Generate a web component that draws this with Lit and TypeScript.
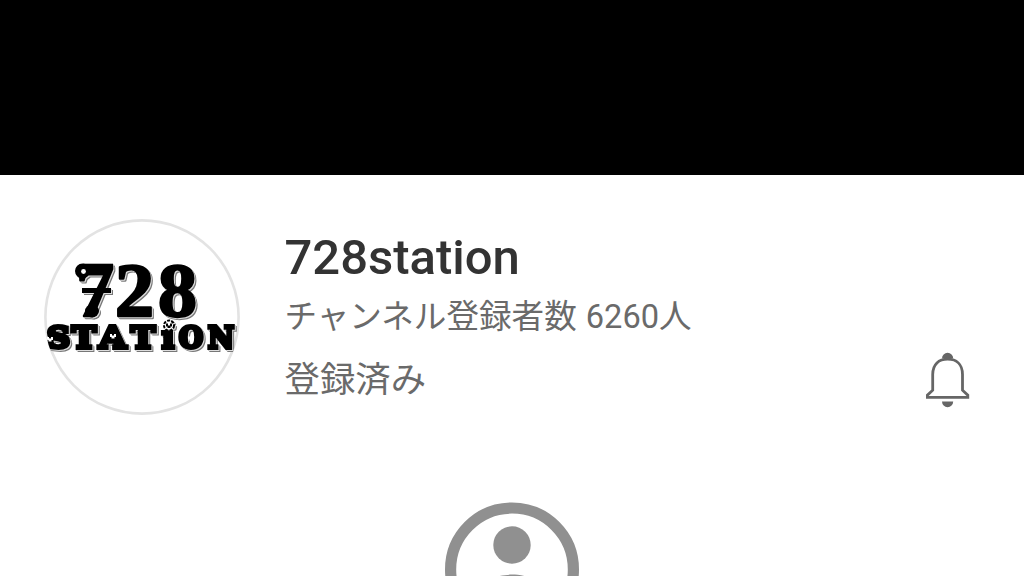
import { LitElement, html, css, svg } from 'lit';
import { customElement, property } from 'lit/decorators.js';

interface Letter {
  char: string;
  x: number;
  width: number;
}

const NUMBER: Letter[] = [
  { char: '7', x: 32, width: 38 },
  { char: '2', x: 71, width: 39 },
  { char: '8', x: 114, width: 39 },
];

const WORD: Letter[] = [
  { char: 'S', x: 3, width: 23 },
  { char: 'T', x: 28, width: 24 },
  { char: 'A', x: 55, width: 27 },
  { char: 'T', x: 87, width: 24 },
  { char: 'ı', x: 118, width: 12 },
  { char: 'O', x: 135, width: 24 },
  { char: 'N', x: 164, width: 26 },
];

@customElement('channel-avatar')
export class ChannelAvatar extends LitElement {
  static styles = css`
    :host {
      display: block;
      width: 196px;
      height: 196px;
    }

    svg {
      display: block;
    }

    .ring {
      fill: #fff;
      stroke: #e3e3e3;
      stroke-width: 2.6;
    }

    .logo {
      filter: drop-shadow(1px 1px 0 #ddd) drop-shadow(1.8px 1.8px 0.6px #777);
    }

    text {
      fill: #000;
      stroke: #000;
    }

    .number {
      font: bold 76px 'Liberation Serif', serif;
      stroke-width: 2.4;
      stroke-linejoin: round;
    }

    .word {
      font: bold 29px 'DejaVu Serif', serif;
      stroke-width: 4;
    }

    .detail {
      fill: none;
      stroke: #000;
      stroke-width: 5;
    }

    .flower {
      fill: #fff;
      stroke: #000;
      stroke-width: 2;
      stroke-dasharray: 3 1.2;
    }

    .heart {
      fill: #fff;
    }
  `;

  letters(list: Letter[], y: number, name: string) {
    return list.map(
      (l) => svg`
        <text class=${name} x=${l.x} y=${y} textLength=${l.width} lengthAdjust="spacingAndGlyphs">${l.char}</text>
      `
    );
  }

  heart(x: number, y: number) {
    return svg`
      <path class="heart" d="M${x} ${y}h2v1.5h2v-1.5h2v3h-1.5v1.5h-3v-1.5h-1.5z" />
    `;
  }

  render() {
    return html`
      <svg width="196" height="196" viewBox="0 0 196 196" role="img" aria-label="728 STATION">
        <defs>
          <clipPath id="disc"><circle cx="98" cy="98" r="97.5" /></clipPath>
        </defs>
        <circle class="ring" cx="98" cy="98" r="96.6" />
        <g clip-path="url(#disc)">
          <g class="logo">
            ${this.letters(NUMBER, 97, 'number')}
            <path class="detail" d="M38 71.5H67" />
            <circle class="detail" cx="38.5" cy="52" r="5" />
            <path class="detail" d="M39 47.2H69" />
            <ellipse cx="48" cy="92" rx="7" ry="6.5" />
            ${this.letters(WORD, 129, 'word')}
            <circle class="flower" cx="125" cy="106.5" r="5" />
          </g>
          <circle class="heart" cx="39.5" cy="52.5" r="2.4" />
          ${this.heart(3, 118)} ${this.heart(66, 115)} ${this.heart(144, 117.5)}
          <path d="M122 104.5h2v2h2v-2h2v3h-1.5v1.5h-3v-1.5h-1.5z" />
        </g>
      </svg>
    `;
  }
}

@customElement('app-root')
export class AppRoot extends LitElement {
  static styles = css`
    :host {
      display: flex;
      flex-direction: column;
      height: 576px;
      overflow: hidden;
      background: #fff;
      color: #6a6a6a;
      font-family: Roboto, 'Noto Sans CJK JP', sans-serif;
    }

    .banner {
      flex: none;
      height: 175px;
      background: #000;
    }

    .channel {
      flex: none;
      display: flex;
      align-items: flex-start;
      height: 284px;
      box-sizing: border-box;
      padding: 44px 54px 0 44px;
    }

    .info {
      flex: 1;
      padding: 10px 0 0 44.5px;
    }

    h1 {
      margin: 0;
      font-size: 49px;
      line-height: 58px;
      font-weight: 500;
      color: #333;
    }

    p {
      margin: 0;
      white-space: nowrap;
    }

    .subscribers {
      margin-top: 8px;
      font-size: 32.6px;
      line-height: 44px;
      word-spacing: 1px;
    }

    .subscribed {
      margin-top: 18px;
      font-size: 35.4px;
      line-height: 46px;
    }

    .bell {
      align-self: flex-start;
      margin-top: 133px;
      width: 44px;
      height: 56px;
    }

    .profile {
      display: block;
      flex: none;
      margin: 43px auto 0;
    }
  `;

  @property() name = '728station';

  @property({ type: Number }) subscribers = 6260;

  render() {
    return html`
      <div class="banner"></div>
      <section class="channel">
        <channel-avatar></channel-avatar>
        <div class="info">
          <h1>${this.name}</h1>
          <p class="subscribers">チャンネル登録者数 ${this.subscribers}人</p>
          <p class="subscribed">登録済み</p>
        </div>
        <svg class="bell" viewBox="0 0 44 56" fill="#666">
          <path d="M16 6.5a5.6 5.8 0 0 1 11.2 0zM16 49.6h11.2a5.6 5.6 0 0 1-11.2 0z" />
          <path
            d="M6.7 22.5C6.7 12 13 7.2 21.6 7.2S36.5 12 36.5 22.5V38.2L41.8 43.2V45.4H1.4V43.2L6.7 38.2Z"
            fill="none"
            stroke="#666"
            stroke-width="2.8"
          />
        </svg>
      </section>
      <svg class="profile" width="134" height="134" viewBox="0 0 134 134" fill="#909090">
        <circle cx="67" cy="67.4" r="61.4" fill="none" stroke="#909090" stroke-width="11.2" />
        <circle cx="67" cy="43" r="18.7" />
        <path d="M30 91C30 79 54 72.6 67 72.6S104 79 104 91A44 44 0 0 1 30 91Z" />
      </svg>
    `;
  }
}
